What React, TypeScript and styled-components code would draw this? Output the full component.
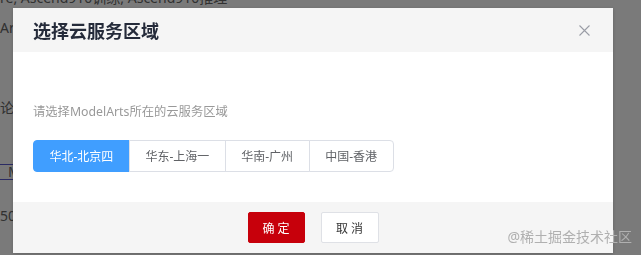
import React, { useState } from "react";
import styled, { createGlobalStyle } from "styled-components";

const GlobalStyle = createGlobalStyle`
  html, body {
    margin: 0;
    padding: 0;
    background: #ffffff;
    overflow: hidden;
  }
  body {
    font-family: "Noto Sans", "Noto Sans CJK SC", sans-serif;
  }
`;

const Page = styled.div`
  width: 641px;
  height: 255px;
  overflow: hidden;
  color: #666;
  font-size: 14px;
`;

const PageLine = styled.div<{ top: number }>`
  margin-top: ${(props) => props.top}px;
  line-height: 20px;
  white-space: nowrap;
`;

const Table = styled.div`
  margin-top: 46px;
  width: 200px;
  border-top: 1px solid #5a5ad0;
  border-bottom: 1px solid #5a5ad0;
  height: 14px;
  line-height: 14px;
  padding-left: 8px;
`;

const Overlay = styled.div`
  position: fixed;
  inset: 0;
  background: rgba(0, 0, 0, 0.52);
`;

const Dialog = styled.div`
  margin: 8px 0 0 13px;
  width: 600px;
  background: #fff;
  box-shadow: 0 1px 4px rgba(0, 0, 0, 0.2);
`;

const Header = styled.div`
  height: 44px;
  background: #f5f5f5;
  display: flex;
  align-items: center;
  justify-content: space-between;
  padding: 0 20px;
`;

const Title = styled.h2`
  margin: 0;
  font-size: 18px;
  font-weight: 700;
  color: #252b3a;
  line-height: 24px;
  margin-top: 2px;
`;

const Close = styled.button`
  border: none;
  background: none;
  padding: 0;
  width: 11px;
  height: 11px;
  margin-right: 3px;
  display: flex;
  cursor: pointer;
`;

const Body = styled.div`
  padding: 50px 20px 30px;
`;

const Label = styled.div`
  font-size: 12.3px;
  line-height: 20px;
  color: #999;
  margin-bottom: 18px;
`;

const Segments = styled.div`
  display: flex;
`;

const Segment = styled.button<{ active: boolean }>`
  height: 32px;
  padding: 0 15.5px;
  font-family: inherit;
  font-size: 12px;
  border: 1px solid ${(props) => (props.active ? "#409eff" : "#dcdfe6")};
  background: ${(props) => (props.active ? "#409eff" : "#fff")};
  color: ${(props) => (props.active ? "#fff" : "#606266")};
  margin-left: -1px;
  cursor: pointer;

  &:first-child {
    margin-left: 0;
    border-radius: 4px 0 0 4px;
  }
  &:last-child {
    border-radius: 0 4px 4px 0;
  }
`;

const Footer = styled.div`
  background: #f5f5f5;
  padding: 10px 0;
  display: flex;
  justify-content: center;
  gap: 16px;
`;

const Button = styled.button<{ primary?: boolean }>`
  height: 31px;
  width: ${(props) => (props.primary ? 57 : 58)}px;
  font-family: inherit;
  font-size: 12px;
  border-radius: 2px;
  border: 1px solid ${(props) => (props.primary ? "#c7000b" : "#dfe1e6")};
  background: ${(props) => (props.primary ? "#c7000b" : "#fff")};
  color: ${(props) => (props.primary ? "#fff" : "#333")};
  cursor: pointer;
`;

const Watermark = styled.div`
  position: fixed;
  right: 9px;
  bottom: 8px;
  font-size: 14px;
  line-height: 20px;
  color: #b0b0b0;
  white-space: nowrap;
`;

const regions = ["华北-北京四", "华东-上海一", "华南-广州", "中国-香港"];

export default function App() {
  const [current, setCurrent] = useState(0);
  return (
    <>
      <GlobalStyle />
      <Page>
        <PageLine top={-12}>re, Ascend910训练, Ascend910推理</PageLine>
        <PageLine top={10}>Ar</PageLine>
        <PageLine top={60}>论</PageLine>
        <Table>M</Table>
        <PageLine top={26}>50</PageLine>
      </Page>
      <Overlay>
        <Dialog>
          <Header>
            <Title>选择云服务区域</Title>
            <Close aria-label="close">
              <svg width="11" height="11" viewBox="0 0 11 11">
                <path
                  d="M0.5 0.5 L10.5 10.5 M10.5 0.5 L0.5 10.5"
                  stroke="#9a9da6"
                  strokeWidth="1.1"
                  fill="none"
                />
              </svg>
            </Close>
          </Header>
          <Body>
            <Label>请选择ModelArts所在的云服务区域</Label>
            <Segments>
              {regions.map((name, index) => (
                <Segment
                  key={name}
                  active={index === current}
                  onClick={() => setCurrent(index)}
                >
                  {name}
                </Segment>
              ))}
            </Segments>
          </Body>
          <Footer>
            <Button primary>确 定</Button>
            <Button>取 消</Button>
          </Footer>
        </Dialog>
      </Overlay>
      <Watermark>@稀土掘金技术社区</Watermark>
    </>
  );
}
